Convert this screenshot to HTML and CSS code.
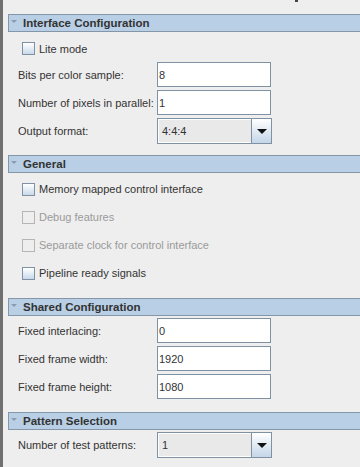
FILE: index.html
```html
<!DOCTYPE html>
<html lang="en">
<head>
    <meta charset="UTF-8">
    <title>Test Pattern Generator</title>
    <link rel="stylesheet" href="styles.css">
</head>
<body>
    <span class="cut-mark"></span>
    <div class="panel">
        <section class="group">
            <div class="head"><i class="tri"></i>Interface Configuration</div>
            <div class="body body-first">
                <label class="check"><span class="box"></span>Lite mode</label>
                <div class="fields">
                    <span class="lbl">Bits per color sample:</span>
                    <input class="txt" type="text" value="8">
                    <span class="lbl">Number of pixels in parallel:</span>
                    <input class="txt" type="text" value="1">
                    <span class="lbl">Output format:</span>
                    <div class="combo"><span class="combo-val">4:4:4</span><span class="combo-btn"><i class="arrow"></i></span></div>
                </div>
            </div>
        </section>

        <section class="group">
            <div class="head"><i class="tri"></i>General</div>
            <div class="body body-checks">
                <label class="check row"><span class="box"></span>Memory mapped control interface</label>
                <label class="check row off"><span class="box"></span>Debug features</label>
                <label class="check row off"><span class="box"></span>Separate clock for control interface</label>
                <label class="check row"><span class="box"></span>Pipeline ready signals</label>
            </div>
        </section>

        <section class="group">
            <div class="head"><i class="tri"></i>Shared Configuration</div>
            <div class="body body-shared">
                <div class="fields">
                    <span class="lbl">Fixed interlacing:</span>
                    <input class="txt" type="text" value="0">
                    <span class="lbl">Fixed frame width:</span>
                    <input class="txt" type="text" value="1920">
                    <span class="lbl">Fixed frame height:</span>
                    <input class="txt" type="text" value="1080">
                </div>
            </div>
        </section>

        <section class="group">
            <div class="head"><i class="tri"></i>Pattern Selection</div>
            <div class="body body-last">
                <div class="fields">
                    <span class="lbl">Number of test patterns:</span>
                    <div class="combo"><span class="combo-val">1</span><span class="combo-btn"><i class="arrow"></i></span></div>
                </div>
            </div>
        </section>
    </div>
</body>
</html>
```

FILE: styles.css
```css
body,html{
    margin:0;
    height:100%;
    overflow:hidden;
}
body{
    background:#eeeeee;
    border-left:3px solid #6f6f6f;
    font-family:"Liberation Sans", Arial, sans-serif;
    font-size:11px;
    color:#333333;
    position:relative;
}
.cut-mark{
    position:absolute;
    left:292px;
    top:0;
    width:3px;
    height:2px;
    background:#444;
}
.panel{
    padding:14px 0 0 5px;
}
.head{
    display:flex;
    align-items:center;
    height:16px;
    border:1px solid #8496a8;
    border-right:none;
    background:#b8cfe5;
    font-weight:bold;
    font-size:11.5px;
    padding-left:2px;
}
.tri{
    width:0;
    height:0;
    border-left:3px solid transparent;
    border-right:3px solid transparent;
    border-top:3px solid #8a9cae;
    margin:0 6px 3px 0;
}
.body{
    padding-left:10px;
}
.body-first{
    padding-top:6px;
    padding-bottom:11px;
}
.body-checks{
    padding-top:2px;
    padding-bottom:11px;
}
.body-shared{
    padding-top:2px;
    padding-bottom:13px;
}
.body-last{
    padding-top:2px;
}
.check{
    display:flex;
    align-items:center;
    height:21px;
    padding-left:4px;
}
.check.row{
    height:28px;
}
.box{
    width:11px;
    height:11px;
    border:1px solid #7f91a3;
    background:linear-gradient(#ffffff, #c9d9ea);
    margin-right:4px;
}
.off{
    color:#9a9a9a;
}
.off .box{
    border-color:#b5b5b5;
    background:none;
}
.fields{
    display:grid;
    grid-template-columns:139px 115px;
    row-gap:3px;
    align-items:center;
    margin-top:3px;
}
.body-first .fields{
    margin-top:3px;
}
.body-shared .fields,
.body-last .fields{
    margin-top:0;
}
.txt{
    box-sizing:border-box;
    width:114px;
    height:25px;
    margin:0;
    padding:0 1px;
    border:1px solid #7f91a3;
    background:#fff;
    font:11px "Liberation Sans", Arial, sans-serif;
    color:#333;
    outline:none;
}
.combo{
    box-sizing:border-box;
    display:flex;
    width:115px;
    height:26px;
    border:1px solid #7f91a3;
    background:#e9e9e9;
}
.combo-val{
    flex:1;
    display:flex;
    align-items:center;
    padding-left:3px;
    border:1px solid #fff;
    border-right:none;
}
.combo-btn{
    width:19px;
    display:flex;
    align-items:center;
    justify-content:center;
    border-left:1px solid #7f91a3;
    background:linear-gradient(#ffffff, #c4d6e8);
}
.arrow{
    width:0;
    height:0;
    border-left:5px solid transparent;
    border-right:5px solid transparent;
    border-top:5px solid #111;
}
```
